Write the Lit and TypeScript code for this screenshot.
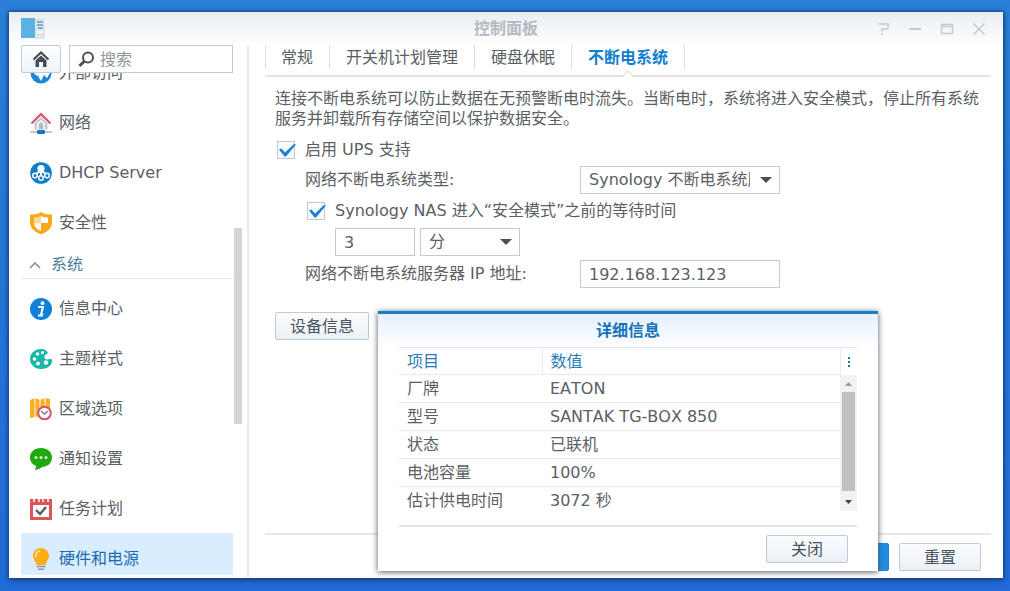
import { LitElement, html, svg, css } from "lit";
import { customElement, state, query } from "lit/decorators.js";
import { classMap } from "lit/directives/class-map.js";

const icons: Record<string, unknown> = {
  access: svg`<circle cx="11" cy="11" r="10.5" fill="#1a86d8"/><path d="M4 12 8 8l4 2 5-4 3 5-3 5-3-3-3 6-3-5z" fill="#fff"/>`,
  network: svg`<path d="M1.5 11.5 11 2l9.500 9.500" fill="none" stroke="#d9536a" stroke-width="2.200"/><path d="M4.500 11v6.500h13V11L11 4.800z" fill="#c3cad1"/><path d="M7 11.500 11 8l4 3.500V17H7z" fill="#fff"/><path d="M8.500 12 11 10l2.500 2v5h-5z" fill="#b5bec6"/><path d="M0 20h22" stroke="#8b9197"/><rect x="7" y="18" width="8" height="4" rx="1" fill="#1b78c0"/>`,
  dhcp: svg`<circle cx="11" cy="11" r="10.800" fill="#0d7cc9"/><circle cx="11" cy="6.500" r="3.600" fill="#fff"/><path d="M11 9v5M10 9l-4 3M12 9l4 3" stroke="#fff" stroke-width="2"/><g fill="#0d7cc9" stroke="#fff" stroke-width="1.500"><circle cx="5" cy="13.500" r="2.300"/><circle cx="11" cy="16" r="2.300"/><circle cx="17" cy="13.500" r="2.300"/></g>`,
  shield: svg`<path d="M0 2.500Q7 3 11 0q4 3 11 2.500V11q0 7-11 11.500Q0 18 0 11z" fill="#f8a81b"/><path d="M11 4v7H4V5.500Q8 5.500 11 4z" fill="#ffc65c"/><path d="M11 11H4q0 5 7 8z" fill="#fff" opacity=".95"/><path d="M11 4v7h7V5.500Q14 5.500 11 4z" fill="#fff"/><path d="M4 11V5.500Q8 5.500 11 4v7z" fill="#fff" opacity=".35"/>`,
  info: svg`<circle cx="11" cy="11" r="11" fill="#0f80da"/><circle cx="12.500" cy="5.200" r="1.900" fill="#fff"/><path d="M8 9h5l-2 7.500h2.200M8 17.500h5" fill="none" stroke="#fff" stroke-width="2"/>`,
  palette: svg`<path d="M11 1C4.500 1 0 5.500 0 11s4.500 10 11 10c6 0 11-3 11-8.500 0-1.500-1-2-2.500-1.500-3 1-6 0-5-3 .5-1.500 2-1.200 3-2.500C18.500 3.500 15 1 11 1z" fill="#18b7a7"/><g fill="#fff"><circle cx="7.500" cy="6" r="1.800"/><circle cx="12.500" cy="4.500" r="1.500"/><circle cx="4.500" cy="11" r="1.800"/><circle cx="8" cy="15.500" r="1.900"/><circle cx="16" cy="14.500" r="2.200"/></g>`,
  region: svg`<path d="M0 2 5 0l5 2 5-2 5 1v17l-5 2-5-2-5 1-5 1z" fill="#f9ae24"/><path d="M5 0v19M10 2v16M15 0v19" stroke="#fff" stroke-width="1"/><circle cx="14.500" cy="15" r="6.300" fill="#fff" stroke="#d5535b" stroke-width="2"/><path d="m11 13 3.500 3 3.500-3" fill="none" stroke="#757b82" stroke-width="1.500"/>`,
  notice: svg`<path d="M11 0C4.500 0 0 4 0 9.500c0 4 2.500 7 6 8.500-.2 2-.6 3-1.500 4 3.500-.3 6-1.500 7.500-3 6-.4 10-4 10-9.500C22 4 17.500 0 11 0z" fill="#1fa90f"/><g fill="#d9f3d4"><circle cx="6" cy="9.500" r="1.500"/><circle cx="11" cy="9.500" r="1.500"/><circle cx="16" cy="9.500" r="1.500"/></g>`,
  task: svg`<path d="M0 1h22v21H0z" fill="#dc5557"/><path d="M3 7h16v12H3z" fill="#fff"/><path d="M4 0v4M9 0v4M13 0v4M18 0v4" stroke="#fff" stroke-width="1.500"/><path d="m6 12 4 4 6-7" fill="none" stroke="#555e68" stroke-width="2.400"/>`,
  bulb: svg`<path d="M11 0C6.500 0 3 3.300 3 7.700c0 3.500 2.500 5 3.500 9.300h9c1-4.300 3.500-5.800 3.500-9.300C19 3.300 15.500 0 11 0z" fill="#fcae16"/><path d="M6 9c-.5-3 1-5.500 4-6" fill="none" stroke="#ffe3a6" stroke-width="1.600"/><path d="M6.500 18.500h9M8 21.200h6" stroke="#8d959c" stroke-width="1.400"/>`,
};

@customElement("app-root")
export class AppRoot extends LitElement {
  @state() private current = "bulb";
  @query(".list") private list!: HTMLElement;

  private readonly before = [
    ["access", "外部访问"],
    ["network", "网络"],
    ["dhcp", "DHCP Server"],
    ["shield", "安全性"],
  ];
  private readonly after = [
    ["info", "信息中心"],
    ["palette", "主题样式"],
    ["region", "区域选项"],
    ["notice", "通知设置"],
    ["task", "任务计划"],
    ["bulb", "硬件和电源"],
  ];
  private readonly tabs = ["常规", "开关机计划管理", "硬盘休眠", "不断电系统"];
  private readonly details = [
    ["厂牌", "EATON"],
    ["型号", "SANTAK TG-BOX 850"],
    ["状态", "已联机"],
    ["电池容量", "100%"],
    ["估计供电时间", "3072 秒"],
  ];

  static styles = css`
    :host {
      display: flex;
      box-sizing: border-box;
      height: 100vh;
      padding: 12px 7px 13px 9px;
      background: linear-gradient(#2a80d8, #226bdb);
      font: 16px/20px "DejaVu Sans", "Noto Sans CJK SC", sans-serif;
      font-kerning: none;
      color: #5a6065;
    }
    * { box-sizing: border-box; }
    button, input, select { font: inherit; font-kerning: none; color: inherit; margin: 0; }
    button { cursor: pointer; }
    .window {
      flex: 1;
      min-width: 0;
      display: flex;
      flex-direction: column;
      background: linear-gradient(#e9edf3, #fff 34px);
      box-shadow: 0 0 3px 1px #164b8d, 0 2px 6px #173f7d;
    }
    .title {
      display: grid;
      grid-template-columns: 1fr auto 1fr;
      align-items: center;
      height: 33px;
      padding: 0 12px;
      flex: none;
    }
    .title h1 { margin: 0; font: inherit; font-weight: 700; color: #b3bac1; }
    .logo { display: block; }
    .controls { display: flex; justify-content: flex-end; gap: 16px; padding-right: 4px; }
    .controls button { border: 0; padding: 0; background: none; height: 16px; }
    .controls svg { display: block; }
    .body { flex: 1; min-height: 0; display: flex; }
    .side {
      width: 240px;
      flex: none;
      display: flex;
      flex-direction: column;
      padding: 0 5px 3px 12px;
      border-right: 2px solid #e8eaec;
    }
    .tools { display: flex; gap: 8px; height: 28px; flex: none; padding-right: 9px; }
    .home {
      width: 40px;
      padding: 0;
      display: grid;
      place-items: center;
      border: 1px solid #c3ccd5;
      border-radius: 2px;
      background: linear-gradient(#fff, #edf3f9);
    }
    .search {
      flex: 1;
      min-width: 0;
      display: flex;
      align-items: center;
      gap: 5px;
      padding-left: 8px;
      border: 1px solid #c3ccd5;
      background: #fff;
    }
    .search svg { flex: none; }
    .search input { flex: 1; min-width: 0; border: 0; padding: 2px 0 0; outline: 0; background: none; }
    .search input::placeholder { color: #8f969c; opacity: 1; }
    .scroller { flex: 1; min-height: 0; display: flex; }
    .list { flex: 1; min-width: 0; overflow: hidden; }
    .item {
      display: flex;
      align-items: center;
      gap: 7px;
      height: 50px;
      padding: 1px 0 0 9px;
      color: inherit;
      text-decoration: none;
    }
    .item.on { background: #d9edff; color: #1c6cb4; }
    .group { height: 36px; padding-bottom: 4px; }
    .group button {
      display: flex;
      align-items: center;
      gap: 10px;
      width: 100%;
      height: 32px;
      padding: 4px 0 0 8px;
      border: 0;
      border-bottom: 1px solid #e6e9ec;
      background: none;
      color: #4c7c9a;
    }
    .track { width: 8px; flex: none; padding-top: 155px; margin-left: 1px; }
    .thumb { height: 196px; background: #d4d4d4; }
    .main {
      position: relative;
      flex: 1;
      min-width: 0;
      display: flex;
      flex-direction: column;
      padding: 0 12px 7px 16px;
    }
    .tabs { display: flex; height: 32px; border-bottom: 2px solid #e1e4e7; padding-bottom: 6px; }
    .tabs button {
      position: relative;
      height: 24px;
      padding: 2px 16px 0;
      border: 0;
      border-right: 1px solid #dde0e3;
      background: none;
      white-space: nowrap;
    }
    .tabs button:first-child { border-left: 1px solid #dde0e3; padding: 2px 16px 0 15px; }
    .tabs .on { font-weight: 700; color: #127fcd; }
    .tabs .on::after {
      content: "";
      position: absolute;
      left: 50%;
      bottom: -11px;
      width: 7px;
      height: 7px;
      margin-left: -4px;
      border: solid #dde0e3;
      border-width: 1px 0 0 1px;
      background: #fff;
      transform: rotate(45deg);
    }
    .form { flex: 1; padding: 12px 10px 0; }
    .form p { margin: 0 0 8px; }
    .line { display: flex; align-items: center; min-height: 28px; }
    .l1 { padding-left: 30px; }
    .l2 { padding-left: 60px; gap: 5px; margin-bottom: 4px; }
    .line .name { width: 275px; flex: none; }
    .tick { display: flex; align-items: center; gap: 10px; padding-left: 2px; margin: 3px 0; min-height: 26px; }
    .tick.top { margin: 0 0 3px; }
    .l1.tick { padding-left: 32px; min-height: 28px; }
    .box { display: grid; width: 18px; height: 18px; flex: none; }
    .box input { grid-area: 1/1; width: 18px; height: 18px; appearance: none; border: 1px solid #c0c8d0; background: #f8fbfd; }
    .box svg { grid-area: 1/1; visibility: hidden; pointer-events: none; z-index: 1; overflow: visible; }
    .box input:checked + svg { visibility: visible; }
    .field {
      height: 28px;
      width: 200px;
      padding: 0 8px;
      border: 1px solid #c2c9cf;
      border-radius: 0;
      background: #fff;
      outline: 0;
    }
    .num { width: 80px; }
    .select { display: grid; width: 200px; align-items: center; }
    .select.unit { width: 100px; }
    .select select { grid-area: 1/1; width: 100%; appearance: none; padding-right: 29px; }
    .select::after {
      content: "";
      grid-area: 1/1;
      justify-self: end;
      margin-right: 8px;
      width: 12px;
      height: 6px;
      background: #4c5055;
      clip-path: polygon(0 0, 100% 0, 50% 100%);
      pointer-events: none;
    }
    .btn {
      height: 28px;
      min-width: 82px;
      padding: 2px 14px 0;
      border: 1px solid #c0c9d3;
      border-radius: 2px;
      background: linear-gradient(#fafcfe, #eaf0f7);
      color: #48535e;
    }
    .device { margin-top: 24px; }
    .primary { background: #1d8fe4; border-color: #1d84d4; color: #fff; }
    .foot {
      display: flex;
      justify-content: flex-end;
      gap: 10px;
      padding: 8px 10px 0 0;
      border-top: 2px solid #e4e6e9;
    }
    .overlay {
      position: absolute;
      inset: 0 12px 7px 16px;
      display: flex;
      justify-content: center;
      align-items: flex-end;
      pointer-events: none;
    }
    .dialog {
      width: 500px;
      max-width: 100%;
      pointer-events: auto;
      padding: 0 21px 8px;
      border-top: 3px solid #1480c2;
      background: linear-gradient(#e4f0fd, #fff 34px);
      box-shadow: 0 1px 6px #4b535b;
    }
    .dialog h2 { margin: 0; height: 33px; font: inherit; line-height: 34px; font-weight: 700; text-align: center; color: #1373bc; }
    .grid { display: flex; border-top: 1px solid #e1e7ec; padding-bottom: 11px; }
    table { flex: 1; border-collapse: collapse; table-layout: fixed; }
    th, td { height: 28px; padding: 2px 8px 0; text-align: left; font-weight: 400; border-bottom: 1px solid #e9ecee; white-space: nowrap; }
    th { height: 26px; color: #2a7ab8; }
    th:first-child { width: 143px; border-right: 1px solid #e9ecee; }
    tr:last-child td { border-bottom: 0; }
    .rail { width: 17px; flex: none; display: flex; flex-direction: column; }
    .more { height: 27px; border: 0; border-left: 1px solid #e9ecee; padding: 0; display: grid; place-items: center; background: none; }
    .bar { height: 136px; padding: 0 2px; display: flex; flex-direction: column; background: #f2f2f2; }
    .bar i { height: 99px; background: #c1c1c1; }
    .bar svg { width: 13px; height: 17px; }
    .bar svg:last-child { height: 20px; }
    .end { border-top: 2px solid #e2e5e8; padding: 8px 9px 0; display: flex; justify-content: flex-end; }
  `;

  firstUpdated() {
    this.list.scrollTop = 26;
  }

  private item([id, name]: string[]) {
    return html`<a href="#${id}" class=${classMap({ item: true, on: this.current === id })}
      @click=${(e: Event) => { e.preventDefault(); this.current = id; }}>
      <svg width="22" height="22" viewBox="0 0 22 22" aria-hidden="true">${icons[id]}</svg>${name}</a>`;
  }

  private box(id: string) {
    return html`<span class="box"><input type="checkbox" id=${id} checked>
      <svg width="18" height="18" viewBox="0 0 18 18"><path d="m2 8.500 2.500-1 3.500 4 9-8.500 2 .5L9 15.500H7.500z" fill="#1b7fd0"/></svg></span>`;
  }

  render() {
    return html`
      <div class="window">
        <header class="title">
          <svg class="logo" width="24" height="21" viewBox="0 0 24 21" aria-hidden="true">
            <path d="M0 0h14v20H0z" fill="#5bb2e2"/><path d="M14 0h10v21H14z" fill="#e1e5e8"/>
            <path d="M16 4h6M16 7h6M17 10h5" stroke="#7baed0" stroke-width="2"/><path d="M16 14h5" stroke="#fff" stroke-width="2"/>
          </svg>
          <h1>控制面板</h1>
          <div class="controls">
            <button aria-label="帮助"><svg width="16" height="16" fill="none" stroke="#c4cad0" stroke-width="1.500"><path d="M3 3h10v5H7v3M7 12v2"/></svg></button>
            <button aria-label="最小化"><svg width="16" height="16"><path d="M2 8h12" stroke="#c4cad0" stroke-width="2"/></svg></button>
            <button aria-label="最大化"><svg width="16" height="16" fill="none" stroke="#c4cad0" stroke-width="1.500"><path d="M2.500 3.500h11v9h-11zM2.500 5.500h11"/></svg></button>
            <button aria-label="关闭窗口"><svg width="16" height="16" fill="none" stroke="#c4cad0" stroke-width="1.500"><path d="m2.500 2.500 11 11m0-11-11 11"/></svg></button>
          </div>
        </header>
        <div class="body">
          <nav class="side">
            <div class="tools">
              <button class="home" aria-label="主页"><svg width="18" height="17" viewBox="0 0 18 17"><path d="M1.500 8.500 9 1.500l7.500 7" fill="none" stroke="#434c55" stroke-width="2.200"/><path d="M3.500 9.500 9 4.500l5.500 5V16H11v-5H7v5H3.500z" fill="#434c55"/></svg></button>
              <label class="search">
                <svg width="17" height="17" viewBox="0 0 17 17" fill="none" stroke="#4b5157"><circle cx="10" cy="6.500" r="5" stroke-width="2"/><path d="m6.500 10-5 5" stroke-width="3"/></svg>
                <input type="search" placeholder="搜索" aria-label="搜索">
              </label>
            </div>
            <div class="scroller">
              <div class="list">
                ${this.before.map((i) => this.item(i))}
                <div class="group"><button><svg width="12" height="8" viewBox="0 0 12 8"><path d="m1 7 5-5 5 5" fill="none" stroke="#7f8a92" stroke-width="1.500"/></svg>系统</button></div>
                ${this.after.map((i) => this.item(i))}
              </div>
              <div class="track"><div class="thumb"></div></div>
            </div>
          </nav>
          <main class="main">
            <div class="tabs" role="tablist">
              ${this.tabs.map((t, i) => html`<button role="tab" aria-selected=${i === 3} class=${classMap({ on: i === 3 })}>${t}</button>`)}
            </div>
            <div class="form">
              <p>连接不断电系统可以防止数据在无预警断电时流失。当断电时，系统将进入安全模式，停止所有系统服务并卸载所有存储空间以保护数据安全。</p>
              <div class="tick top">${this.box("ups")}<label for="ups">启用 UPS 支持</label></div>
              <div class="line l1">
                <label class="name" for="type">网络不断电系统类型:</label>
                <span class="select"><select class="field" id="type"><option>Synology 不断电系统服务器</option></select></span>
              </div>
              <div class="tick l1">${this.box("wait")}<label for="wait">Synology NAS 进入“安全模式”之前的等待时间</label></div>
              <div class="line l2">
                <input class="field num" value="3" aria-label="等待时间">
                <span class="select unit"><select class="field" aria-label="时间单位"><option>分</option></select></span>
              </div>
              <div class="line l1">
                <label class="name" for="ip">网络不断电系统服务器 IP 地址:</label>
                <input class="field" id="ip" value="192.168.123.123">
              </div>
              <button class="btn device">设备信息</button>
            </div>
            <footer class="foot"><button class="btn primary">应用</button><button class="btn">重置</button></footer>
            <div class="overlay">
              <section class="dialog" role="dialog" aria-labelledby="dt">
                <h2 id="dt">详细信息</h2>
                <div class="grid">
                  <table>
                    <thead><tr><th>项目</th><th>数值</th></tr></thead>
                    <tbody>${this.details.map(([k, v]) => html`<tr><td>${k}</td><td>${v}</td></tr>`)}</tbody>
                  </table>
                  <div class="rail">
                    <button class="more" aria-label="列选项"><svg width="4" height="10" fill="#17818f"><path d="M1 0h2v2H1zM1 4h2v2H1zM1 8h2v2H1z"/></svg></button>
                    <div class="bar">
                      <svg viewBox="0 0 13 17"><path d="m3 11 3.500-4 3.500 4z" fill="#9b9b9b"/></svg>
                      <i></i>
                      <svg viewBox="0 0 13 20"><path d="m3 9 3.500 4L10 9z" fill="#454545"/></svg>
                    </div>
                  </div>
                </div>
                <div class="end"><button class="btn">关闭</button></div>
              </section>
            </div>
          </main>
        </div>
      </div>
    `;
  }
}
